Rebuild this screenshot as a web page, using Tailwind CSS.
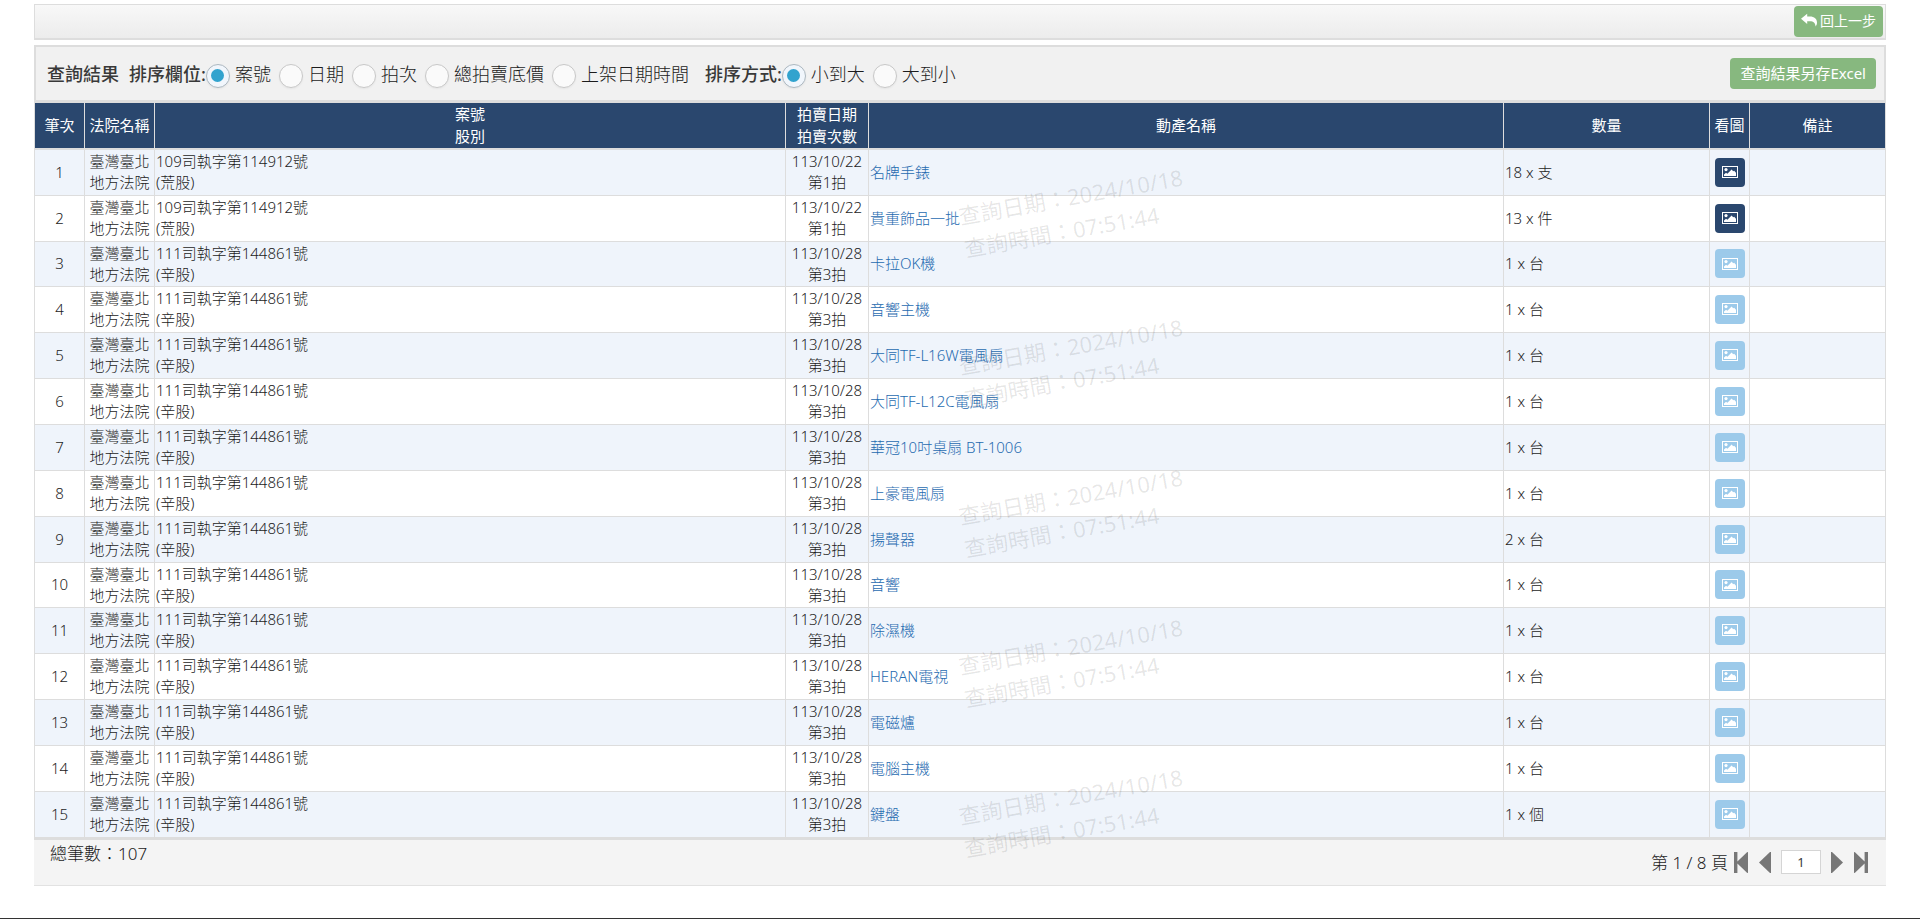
<!DOCTYPE html>
<html lang="zh-Hant">
<head>
<meta charset="utf-8">
<title>查詢結果</title>
<script src="https://cdn.jsdelivr.net/npm/@tailwindcss/browser@4"></script>
</head>
<body class="flex min-h-screen flex-col bg-white font-['Noto_Sans','Noto_Sans_CJK_TC',sans-serif] text-[15px] leading-[21px] font-light text-[#1c1c1c]">
<svg class="hidden" aria-hidden="true">
  <symbol id="picture" viewBox="0 0 16 12">
    <path fill="currentColor" fill-rule="evenodd" d="M0 0h16v12H0zM1 1v10h14V1z"/>
    <circle cx="4" cy="3.6" r="1.6" fill="currentColor"/>
    <path fill="currentColor" d="M2 10V8.400l2-1.600 1.400.9L9.600 3.400l1.600 1.800 1-.5L14 6.800V10z"/>
  </symbol>
</svg>
<main class="px-[34px] pt-1">
  <div class="flex h-9 items-start justify-end border border-b-2 border-[#ddd] bg-linear-to-b from-[#f8f8f8] to-[#ececec] pt-px pr-0.5">
    <button type="button" class="flex h-[31px] items-center gap-0.5 rounded-sm bg-[#87b87f] px-[7px] pb-0.5 text-sm font-normal text-white">
      <svg class="h-[15px] w-[17px]" viewBox="0 0 17 15" fill="currentColor"><path d="M0 5.700 6.200.8v2.700h2.600c4.600 0 7.200 2.500 7.200 6 0 1.700-.5 2.900-1.400 3.900-.3-3.200-2-5.100-5.800-5.100H6.200v2.600z"/></svg>回上一步
    </button>
  </div>

  <form class="mt-[5px] flex h-[58px] items-center justify-between border-2 border-b-3 border-[#ddd] bg-[#f1f1f1] pr-2 pl-[11px]">
    <div class="flex items-center pt-1 text-lg">
      <b class="mr-2.5 pb-1 font-medium text-[#393939]">查詢結果</b>
      <fieldset class="flex items-center" id="field">
        <legend class="float-left pb-1 font-medium text-[#393939]">排序欄位:</legend>
      </fieldset>
      <fieldset class="ml-2 flex items-center" id="order">
        <legend class="float-left pb-1 font-medium text-[#393939]">排序方式:</legend>
      </fieldset>
    </div>
    <button type="button" class="h-[31px] rounded-sm bg-[#87b87f] px-2.5 text-[15px] font-normal text-white">查詢結果另存Excel</button>
  </form>

  <div class="relative">
    <table class="w-full table-fixed border-separate border-spacing-0 border-l border-[#ddd]">
      <colgroup><col class="w-[50px]"><col class="w-[70px]"><col class="w-[631px]"><col class="w-[83px]"><col class="w-[635px]"><col class="w-[206px]"><col class="w-10"><col class="w-[136px]"></colgroup>
      <thead>
        <tr class="h-[47px] bg-[#2a476e] leading-[22px] text-white [&>th]:border-r [&>th]:border-b-2 [&>th]:border-[#ddd] [&>th]:p-0 [&>th]:pb-px [&>th]:font-normal">
          <th>筆次</th><th>法院名稱</th><th>案號<br>股別</th><th>拍賣日期<br>拍賣次數</th><th>動產名稱</th><th>數量</th><th>看圖</th><th>備註</th>
        </tr>
      </thead>
      <tbody id="rows"></tbody>
    </table>
    <div id="marks" class="pointer-events-none absolute top-[35px] left-1/2 text-[22px] leading-[33px] font-normal whitespace-nowrap text-black/10" aria-hidden="true"></div>
  </div>

  <div class="flex h-[46px] items-start justify-between border-b border-[#e2e2e2] bg-[#f4f4f4] pr-[18px] pl-4 text-[17px]">
    <span class="pt-[3px]">總筆數：107</span>
    <div class="flex items-center pt-2.5 text-[#777]">
      <span class="mr-1.5 text-[#1c1c1c]">第 1 / 8 頁</span>
      <button type="button" aria-label="第一頁" class="mr-[11px]"><svg class="h-[21px] w-3.5" viewBox="0 0 14 21" fill="currentColor"><path d="M0 0h3.400v9.600L13 .3q1-.8 1 .5v19.400q0 1.300-1 .5l-9.600-9.300V21H0z"/></svg></button>
      <button type="button" aria-label="上一頁" class="mr-2.5"><svg class="h-[21px] w-3" viewBox="0 0 12 21" fill="currentColor"><path d="M12 0v21h-1L0 10.500 11 0z"/></svg></button>
      <input aria-label="頁碼" value="1" class="h-6 w-10 border border-[#d5d5d5] bg-white p-0 text-center text-[13px] font-normal text-[#393939]">
      <button type="button" aria-label="下一頁" class="mr-[11px] ml-2.5"><svg class="h-[21px] w-3" viewBox="0 0 12 21" fill="currentColor"><path d="M0 0h1l11 10.500L1 21H0z"/></svg></button>
      <button type="button" aria-label="最後一頁"><svg class="h-[21px] w-3.5" viewBox="0 0 14 21" fill="currentColor"><path d="M14 0h-3.400v9.600L1 .3Q0-.5 0 .8v19.400q0 1.300 1 .5l9.600-9.300V21H14z"/></svg></button>
    </div>
  </div>
</main>
<div class="mt-auto h-px bg-[#333]"></div>

<script>
const option = (group, text, i) => `
  <label class="mr-2 flex items-center gap-[5px]">
    <input type="radio" name="${group}" ${i ? '' : 'checked'} class="grid size-6 appearance-none place-content-center rounded-full border border-[#c8c8c8] bg-[#fafafa] shadow-xs before:size-[13px] before:rounded-full checked:border-[#adb8c0] checked:bg-[#f1f6fc] checked:before:bg-[#32a3ce]">
    <span class="pb-1">${text}</span>
  </label>`;
const addOptions = (group, texts) =>
  document.getElementById(group).insertAdjacentHTML('beforeend', texts.map((t, i) => option(group, t, i)).join(''));
addOptions('field', ['案號', '日期', '拍次', '總拍賣底價', '上架日期時間']);
addOptions('order', ['小到大', '大到小']);

const first = ['109司執字第114912號', '(荒股)', '113/10/22', '第1拍'];
const second = ['111司執字第144861號', '(辛股)', '113/10/28', '第3拍'];
const items = [
  ['名牌手錶', '18 x 支'], ['貴重飾品一批', '13 x 件'], ['卡拉OK機', '1 x 台'], ['音響主機', '1 x 台'],
  ['大同TF-L16W電風扇', '1 x 台'], ['大同TF-L12C電風扇', '1 x 台'], ['華冠10吋桌扇 BT-1006', '1 x 台'],
  ['上豪電風扇', '1 x 台'], ['揚聲器', '2 x 台'], ['音響', '1 x 台'], ['除濕機', '1 x 台'],
  ['HERAN電視', '1 x 台'], ['電磁爐', '1 x 台'], ['電腦主機', '1 x 台'], ['鍵盤', '1 x 個']
];
document.getElementById('rows').innerHTML = items.map(([name, qty], i) => {
  const [no, unit, date, round] = i < 2 ? first : second;
  return `
  <tr class="h-[46px] odd:bg-[#eff4fb] nth-[7n+3]:h-[45px] last:h-12 [&>td]:border-r [&>td]:border-b [&>td]:border-[#ddd] [&>td]:px-px [&>td]:pt-0 [&>td]:pb-px last:[&>td]:border-b-3">
    <td class="text-center">${i + 1}</td>
    <td class="text-center">臺灣臺北<br>地方法院</td>
    <td>${no}<br>${unit}</td>
    <td class="text-center">${date}<br>${round}</td>
    <td><a href="#" class="text-[#1f6bb0]">${name}</a></td>
    <td>${qty}</td>
    <td><button type="button" aria-label="看圖" ${i < 2 ? '' : 'disabled'} class="mx-auto grid h-[29px] w-[30px] place-content-center rounded-sm bg-[#2a476e] text-white disabled:bg-[#9ccaea]"><svg class="h-3 w-4"><use href="#picture"/></svg></button></td>
    <td></td>
  </tr>`;
}).join('');

document.getElementById('marks').innerHTML = Array.from({length: 5}, () =>
  '<div class="grid h-[150px] items-center"><p class="-rotate-10">查詢日期：2024/10/18<br>查詢時間：07:51:44</p></div>').join('');
</script>
</body>
</html>
